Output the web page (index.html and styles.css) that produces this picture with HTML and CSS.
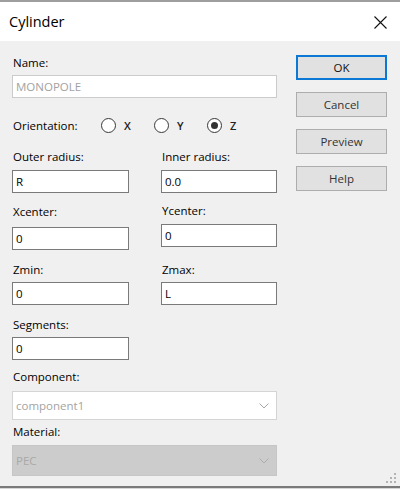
FILE: index.html
```html
<!DOCTYPE html>
<html>
<head>
<meta charset="utf-8">
<link rel="stylesheet" href="styles.css">
</head>
<body>
<div class="window">
  <div class="titlebar">
    <span class="title">Cylinder</span>
    <svg class="close" width="13" height="13" viewBox="0 0 13 13"><path d="M0.5 0.5 L12.5 12.5 M12.5 0.5 L0.5 12.5" stroke="#111" stroke-width="1.1" fill="none"/></svg>
  </div>
  <div class="content">
    <div class="form">
      <div class="label">Name:</div>
      <div class="field field-disabled field-full m5">MONOPOLE</div>

      <div class="orient">
        <div class="orient-label">Orientation:</div>
        <div class="radio"><span class="circle"></span><span class="letter">X</span></div>
        <div class="radio"><span class="circle"></span><span class="letter">Y</span></div>
        <div class="radio"><span class="circle"><span class="dot"></span></span><span class="letter">Z</span></div>
      </div>

      <div class="pair pair-1">
        <div class="cell">
          <div class="label">Outer radius:</div>
          <div class="field m6">R</div>
        </div>
        <div class="cell">
          <div class="label">Inner radius:</div>
          <div class="field m6">0.0</div>
        </div>
      </div>

      <div class="pair pair-2">
        <div class="cell cell-xc">
          <div class="label">Xcenter:</div>
          <div class="field m8">0</div>
        </div>
        <div class="cell cell-yc">
          <div class="label">Ycenter:</div>
          <div class="field m6">0</div>
        </div>
      </div>

      <div class="pair pair-3">
        <div class="cell">
          <div class="label">Zmin:</div>
          <div class="field m5">0</div>
        </div>
        <div class="cell">
          <div class="label">Zmax:</div>
          <div class="field m5">L</div>
        </div>
      </div>

      <div class="segments">
        <div class="label">Segments:</div>
        <div class="field field-half m5">0</div>
      </div>

      <div class="label label-component">Component:</div>
      <div class="select select-component">
        <span>component1</span>
        <svg width="10" height="6" viewBox="0 0 10 6"><path d="M0.5 0.5 L5 5 L9.5 0.5" stroke="#a6a6a6" stroke-width="1" fill="none"/></svg>
      </div>

      <div class="label label-material">Material:</div>
      <div class="select select-material">
        <span>PEC</span>
        <svg width="10" height="6" viewBox="0 0 10 6"><path d="M0.5 0.5 L5 5 L9.5 0.5" stroke="#adadad" stroke-width="1" fill="none"/></svg>
      </div>
    </div>

    <div class="buttons">
      <div class="btn btn-default">OK</div>
      <div class="btn">Cancel</div>
      <div class="btn">Preview</div>
      <div class="btn">Help</div>
    </div>
  </div>
  <svg class="grip" width="11" height="11" viewBox="0 0 11 11">
    <rect x="8" y="0" width="2" height="2" fill="#b3b3b3"/>
    <rect x="4" y="4" width="2" height="2" fill="#b3b3b3"/>
    <rect x="8" y="4" width="2" height="2" fill="#b3b3b3"/>
    <rect x="0" y="8" width="2" height="2" fill="#b3b3b3"/>
    <rect x="4" y="8" width="2" height="2" fill="#b3b3b3"/>
    <rect x="8" y="8" width="2" height="2" fill="#b3b3b3"/>
  </svg>
</div>
</body>
</html>
```

FILE: styles.css
```css
* { box-sizing: border-box; }

html, body {
  margin: 0;
  padding: 0;
}

body {
  width: 400px;
  height: 489px;
  overflow: hidden;
  font-family: "Open Sans", "Noto Sans", sans-serif;
  font-size: 11.5px;
  color: #000;
  background: #f0f0f0;
}

.window {
  position: relative;
  height: 489px;
  display: flex;
  flex-direction: column;
  border-top: 2px solid #9e9e9e;
  border-bottom: 1px solid #d6d6d6;
  background: #f0f0f0;
}

.titlebar {
  height: 39px;
  flex: none;
  background: #fff;
  display: flex;
  align-items: center;
  justify-content: space-between;
  padding: 0 13px 0 9px;
}

.title {
  font-size: 14.5px;
  line-height: 16px;
  color: #000;
}

.close { display: block; margin-top: 1px; }

.content {
  flex: 1;
  display: flex;
  border-bottom: 2px solid #7a7a7a;
}

.form {
  width: 296px;
  padding: 15px 0 0 12px;
}

.label {
  height: 14px;
  line-height: 14px;
  padding-left: 1px;
  white-space: nowrap;
}

.field {
  height: 23px;
  line-height: 21px;
  border: 1px solid #7a7a7a;
  background: #fff;
  padding-left: 3px;
  white-space: nowrap;
}

.field-disabled {
  border-color: #cbcbcb;
  color: #a2a2a2;
}

.field-full { width: 265px; }
.field-half { width: 117px; }

.m5 { margin-top: 5px; }
.m6 { margin-top: 6px; }
.m8 { margin-top: 8px; }

.orient {
  margin-top: 19px;
  height: 16px;
  display: flex;
  align-items: center;
}

.orient-label { width: 89px; padding-left: 1px; }

.radio {
  width: 53px;
  display: flex;
  align-items: center;
  gap: 8px;
}

.circle {
  width: 15px;
  height: 15px;
  border: 1.5px solid #383838;
  border-radius: 50%;
  display: flex;
  align-items: center;
  justify-content: center;
  background: #fff;
}

.dot {
  width: 7px;
  height: 7px;
  border-radius: 50%;
  background: #333;
}

.letter { font-weight: 600; font-size: 11px; color: #222; }

.pair {
  display: grid;
  grid-template-columns: 117px 116px;
  column-gap: 32px;
  align-items: start;
}

.pair-1 { margin-top: 17px; }
.pair-2 { margin-top: 11px; }
.pair-3 { margin-top: 13px; }

.cell-xc { margin-top: 1px; }

.segments { margin-top: 13px; }

.label-component { margin-top: 10px; }
.label-material { margin-top: 5px; }

.select {
  width: 265px;
  display: flex;
  align-items: center;
  justify-content: space-between;
  padding: 0 7px 0 3px;
  white-space: nowrap;
}

.select svg { display: block; }

.select-component {
  margin-top: 7px;
  height: 29px;
  background: #fff;
  border: 1px solid #d4d4d4;
  color: #a3a3a3;
}

.select-material {
  margin-top: 6px;
  height: 31px;
  background: #cccccc;
  border: 1px solid #c6c6c6;
  color: #a9a9a9;
}

.buttons {
  display: flex;
  flex-direction: column;
  gap: 12px;
  padding-top: 14px;
}

.btn {
  width: 91px;
  height: 25px;
  border: 1px solid #adadad;
  background: #e1e1e1;
  display: flex;
  align-items: center;
  justify-content: center;
  color: #333;
}

.btn-default {
  border: 2px solid #0a78d4;
  color: #111;
}

.grip {
  position: absolute;
  right: 3px;
  bottom: 4px;
}
```
